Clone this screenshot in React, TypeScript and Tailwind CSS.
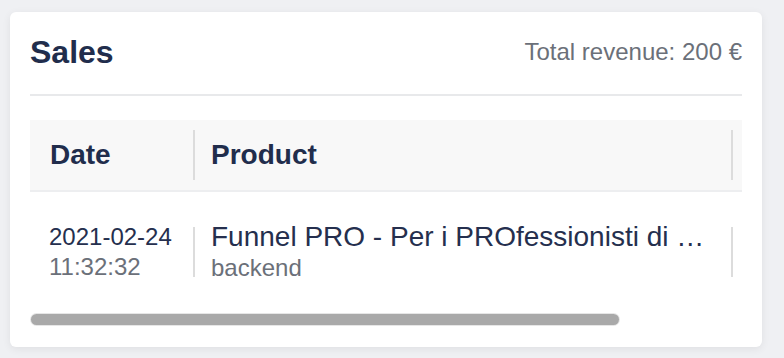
// Sales card with a horizontally scrolled table

const sale = {
  date: '2021-02-24',
  time: '11:32:32',
  product: 'Funnel PRO - Per i PROfessionisti di …',
  kind: 'backend',
};

function Sep({ className = '' }: { className?: string }) {
  return <div className={`w-[2px] h-[50px] bg-[#dcdcdc] shrink-0 ${className}`} />;
}

export default function App() {
  return (
    <div className="w-[784px] h-[358px] bg-[#eff0f3] pt-[12px] pl-[10px] font-['Liberation_Sans',Arial,sans-serif] overflow-hidden">
      <div className="w-[752px] h-[335px] bg-white rounded-[6px] shadow-[0_2px_8px_rgba(0,0,0,0.07)] px-5 pt-5">
        {/* header */}
        <div className="flex items-center justify-between h-[64px] pb-[22px] border-b-2 border-[#e8e9eb]">
          <h1 className="text-[32px] leading-[40px] font-bold text-[#212d4c]">Sales</h1>
          <p className="text-[24px] text-[#6b7079]">Total revenue: 200 €</p>
        </div>

        {/* table */}
        <div className="mt-6 w-[712px] overflow-hidden">
          <div className="w-[900px]">
            <div className="flex items-center h-[72px] bg-[#f8f8f8] border-b-2 border-[#edeef0]">
              <div className="w-[163px] pl-[20px] text-[28px] font-bold text-[#212d4c]">Date</div>
              <Sep />
              <div className="w-[536px] pl-[16px] text-[28px] font-bold text-[#212d4c]">Product</div>
              <Sep />
              <div className="flex-1" />
            </div>
            <div className="flex items-center h-[120px]">
              <div className="w-[163px] pl-[19px] text-[24px] leading-[30px]">
                <div className="text-[#252f4e]">{sale.date}</div>
                <div className="text-[#6b7079]">{sale.time}</div>
              </div>
              <Sep />
              <div className="w-[536px] pl-[16px]">
                <div className="text-[28px] leading-[32px] text-[#252f4e] whitespace-nowrap">{sale.product}</div>
                <div className="text-[24px] leading-[30px] text-[#6b7079]">{sale.kind}</div>
              </div>
              <Sep />
              <div className="flex-1" />
            </div>
          </div>
          {/* scrollbar */}
          <div className="h-[15px] pt-[2px] pl-[1px]">
            <div className="w-[588px] h-[11px] rounded-full bg-[#a9a9a9] ring-1 ring-[#e6e6e6]" />
          </div>
        </div>
      </div>
    </div>
  );
}
